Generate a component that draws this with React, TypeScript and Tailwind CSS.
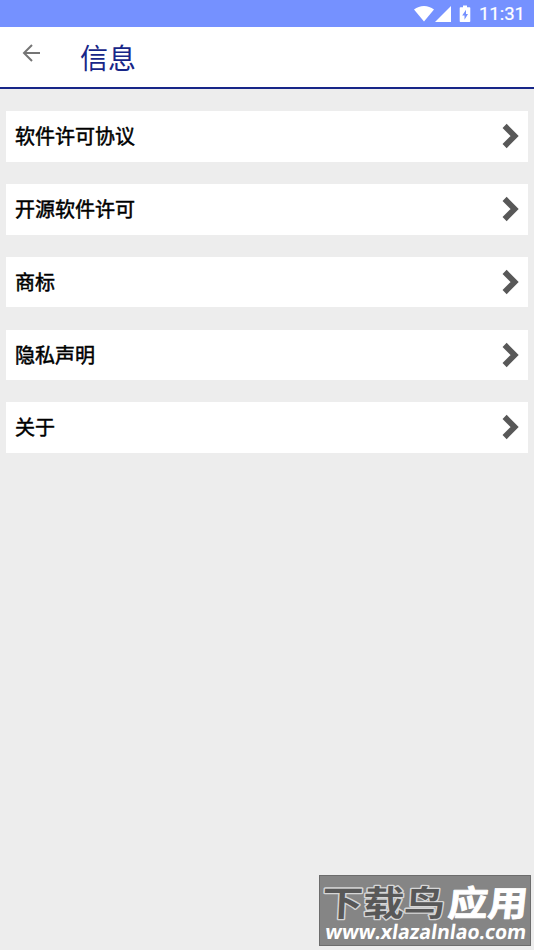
const items = ["软件许可协议", "开源软件许可", "商标", "隐私声明", "关于"];

function StatusBar() {
  return (
    <div className="h-[27px] shrink-0 bg-[#7591ff] flex items-center justify-end pr-[9px] text-white">
      <svg width="20" height="16" viewBox="0 0 20 16" fill="currentColor">
        <path d="M10 15.500 0 3.600C3 1.200 6.300 0 10 0s7 1.200 10 3.600z" />
      </svg>
      <svg className="ml-[1px]" width="17" height="16" viewBox="0 0 17 16" fill="currentColor">
        <path d="M16 0v16H0z" />
      </svg>
      <svg className="ml-[7px]" width="12" height="18" viewBox="0 0 12 18" fill="currentColor">
        <path d="M4 0.500h4v1.700h2.500c.5 0 .8.3.8.8v13.200c0 .5-.3.800-.8.800H1.500c-.5 0-.8-.3-.8-.8V3c0-.5.3-.8.8-.8H4z" />
        <path d="M7 4.800 3.200 10.400h2.300v4.300l3.500-5.800H7z" fill="#7591ff" />
      </svg>
      <span className="ml-[8px] mt-[2px] font-['Roboto',sans-serif] text-[18.500px] leading-none [-webkit-text-stroke:0.200px_#fff]">
        11:31
      </span>
    </div>
  );
}

function Header() {
  return (
    <header className="h-[62px] shrink-0 bg-white border-b-2 border-[#172688] flex items-start pl-[22px]">
      <svg className="mt-[17px]" width="19" height="18" viewBox="0 0 19 18" fill="none" stroke="#757575" strokeWidth="2">
        <path d="M18 9H2M10 1 2 9l8 8" />
      </svg>
      <h1 className="ml-[39px] mt-[10px] font-['Noto_Sans_CJK_SC',sans-serif] text-[28px] leading-[40px] font-normal text-[#172688]">
        信息
      </h1>
    </header>
  );
}

function Row({ label }: { label: string }) {
  return (
    <button className="h-[50.500px] w-full shrink-0 bg-white flex items-center justify-between px-[9px] pb-[0.500px]">
      <span className="font-['Noto_Sans_CJK_SC',sans-serif] text-[20px] leading-[30px] text-black [-webkit-text-stroke:0.500px_#000]">
        {label}
      </span>
      <svg width="17" height="26" viewBox="0 0 17 26" fill="none" stroke="#585858" strokeWidth="5.800">
        <path d="M2.600 2.900 12.600 13 2.600 23.100" />
      </svg>
    </button>
  );
}

function Watermark() {
  return (
    <div className="absolute left-[319px] top-[875px] w-[212px] h-[71px] bg-[#858585] border border-[#6c6c6c]">
      <svg className="block overflow-visible" width="210" height="69" viewBox="0 0 210 69">
        <g fontFamily="'Noto Sans CJK SC', sans-serif" fontSize="41" fontWeight="700" paintOrder="stroke" strokeLinejoin="round">
          <text transform="translate(1.500 40) skewX(-3) scale(1 0.860)" fill="#585858" stroke="#d6d6d6" strokeWidth="3">
            下载鸟
          </text>
          <text transform="translate(127 40) skewX(-6) scale(0.970 0.860)" fill="#fff" stroke="#fff" strokeWidth="1">
            应用
          </text>
        </g>
        <text
          transform="translate(4.500 63) skewX(-8)"
          fontFamily="'Open Sans', sans-serif"
          fontSize="20"
          fontWeight="700"
          textLength="201"
          lengthAdjust="spacingAndGlyphs"
          fill="#fff"
        >
          www.xlazalnlao.com
        </text>
      </svg>
    </div>
  );
}

export default function App() {
  return (
    <div className="relative w-[534px] h-[950px] overflow-hidden bg-[#ededed] flex flex-col">
      <StatusBar />
      <Header />
      <main className="flex flex-col gap-[22.250px] px-[6px] pt-[22.250px]">
        {items.map((label) => (
          <Row key={label} label={label} />
        ))}
      </main>
      <Watermark />
    </div>
  );
}
